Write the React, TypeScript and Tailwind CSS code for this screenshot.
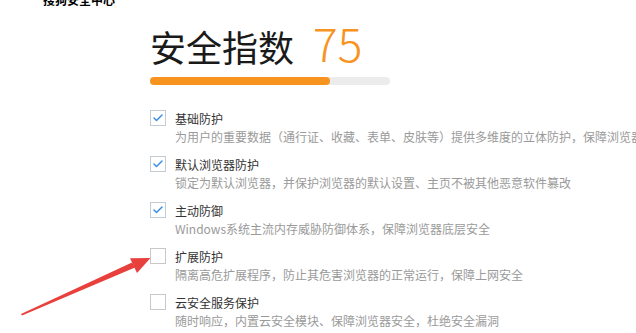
import { Check } from "lucide-react";

const items = [
  {
    title: "基础防护",
    desc: "为用户的重要数据（通行证、收藏、表单、皮肤等）提供多维度的立体防护，保障浏览器安全",
    on: true,
  },
  {
    title: "默认浏览器防护",
    desc: "锁定为默认浏览器，并保护浏览器的默认设置、主页不被其他恶意软件篡改",
    on: true,
  },
  {
    title: "主动防御",
    desc: "Windows系统主流内存威胁防御体系，保障浏览器底层安全",
    on: true,
  },
  {
    title: "扩展防护",
    desc: "隔离高危扩展程序，防止其危害浏览器的正常运行，保障上网安全",
    on: false,
  },
  {
    title: "云安全服务保护",
    desc: "随时响应，内置云安全模块、保障浏览器安全，杜绝安全漏洞",
    on: false,
  },
];

const font = { fontFamily: '"Noto Sans CJK SC", "Noto Sans", sans-serif' };

const App = () => {
  return (
    <div
      className="relative w-[636px] h-[333px] overflow-hidden bg-white"
      style={font}
    >
      <div className="-mt-[6px] pl-[43px] text-[12px] leading-[12px] font-bold text-black whitespace-nowrap">
        搜狗安全中心
      </div>

      <div className="pl-[150px] pt-[17px]">
        <div className="flex items-baseline h-[38px]">
          <span className="text-[36px] leading-[38px] text-[#1a1a1a]">
            安全指数
          </span>
          <span className="ml-[19px] text-[46px] leading-[38px] font-light text-[#f7931e]">
            75
          </span>
        </div>

        <div className="mt-[16px] w-[240px] h-[8px] rounded-full bg-[#ececec]">
          <div className="w-[180px] h-[8px] rounded-full bg-[#f7931e]" />
        </div>

        <div className="mt-[25px] flex flex-col">
          {items.map((it) => (
            <div key={it.title} className="flex h-[46px] whitespace-nowrap">
              <div
                className={`w-[16px] h-[16px] shrink-0 border flex items-center justify-center bg-white ${
                  it.on ? "border-[#c3cbd3]" : "border-[#c8c8c8]"
                }`}
              >
                {it.on && (
                  <Check size={12} strokeWidth={3} className="text-[#3a8ee6]" />
                )}
              </div>
              <div className="ml-[9px] flex flex-col">
                <div className="text-[12px] leading-[18px] text-[#333333]">
                  {it.title}
                </div>
                <div className="text-[12px] leading-[18px] text-[#9a9a9a]">
                  {it.desc}
                </div>
              </div>
            </div>
          ))}
        </div>
      </div>

      <svg
        className="absolute left-0 top-0 pointer-events-none"
        width="636"
        height="333"
        viewBox="0 0 636 333"
      >
        <polygon
          points="21,314 132,262.5 135,267.5 22,315.5"
          fill="#e8403c"
        />
        <polygon
          points="150.5,258 130,258.2 137,273"
          fill="#e8403c"
        />
      </svg>
    </div>
  );
};

export default App;
